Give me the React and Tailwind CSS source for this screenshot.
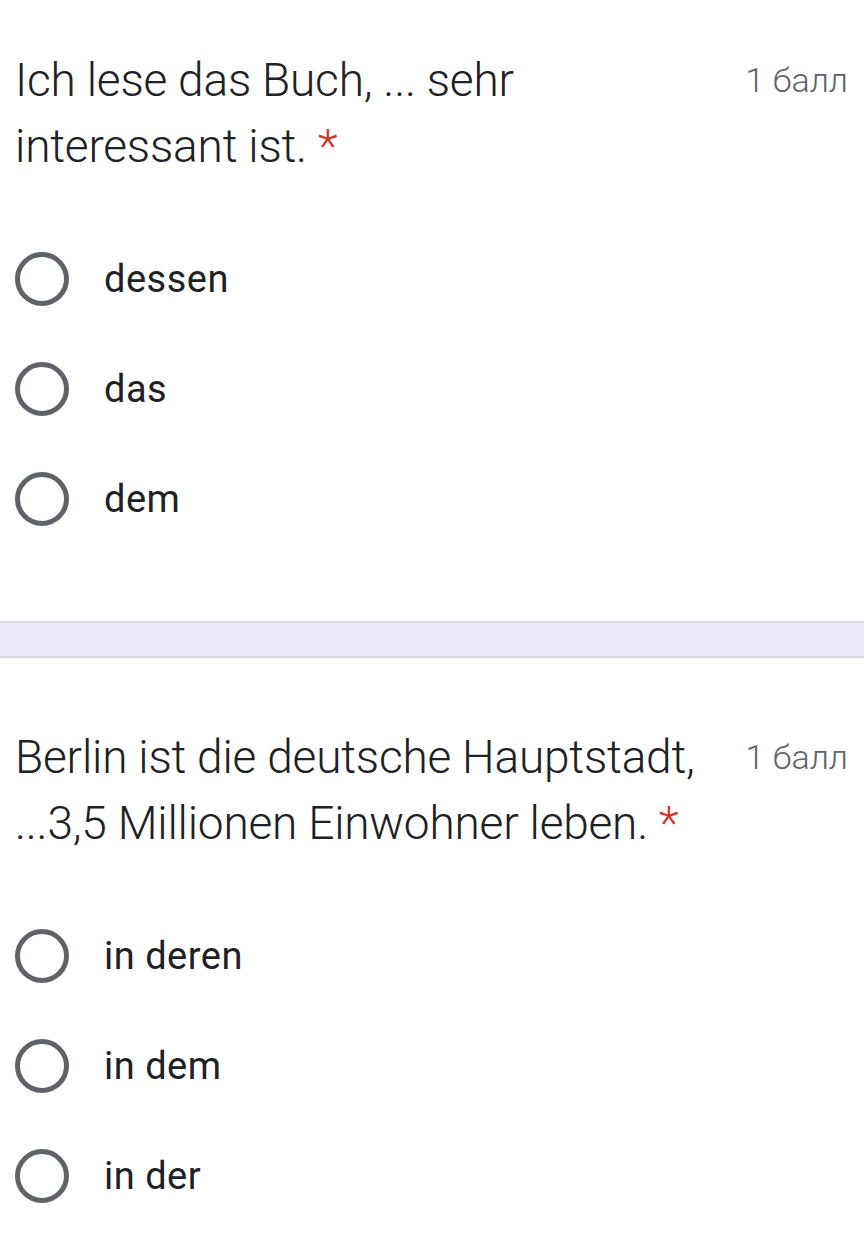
const questions = [
  {
    lines: ["Ich lese das Buch, ... sehr", "interessant ist."],
    options: ["dessen", "das", "dem"],
  },
  {
    lines: ["Berlin ist die deutsche Hauptstadt,", "...3,5 Millionen Einwohner leben."],
    options: ["in deren", "in dem", "in der"],
  },
];

function Radio() {
  return (
    <div className="w-[54px] h-[54px] rounded-full border-[5px] border-[#5f6368] shrink-0" />
  );
}

function Question({ q }) {
  return (
    <div className="pl-[15px] pr-[16px]">
      <div className="flex items-start justify-between">
        <div className="text-[46px] leading-[66px] font-light text-[#202124] tracking-[-0.2px]">
          {q.lines[0]}
          <br />
          {q.lines[1]} <span className="text-[#d93025]">*</span>
        </div>
        <div className="text-[34px] leading-[66px] font-light text-[#5f6368] whitespace-nowrap">
          1 балл
        </div>
      </div>
      <div className="mt-[73px] flex flex-col gap-[56px]">
        {q.options.map((o) => (
          <div key={o} className="flex items-center h-[54px]">
            <Radio />
            <span className="ml-[35px] text-[38px] text-[#202124] tracking-[0.5px]">{o}</span>
          </div>
        ))}
      </div>
    </div>
  );
}

export default function App() {
  return (
    <div className="w-[864px] h-[1260px] bg-white overflow-hidden font-['Roboto',sans-serif]">
      <div className="pt-[47px] pb-[95px]">
        <Question q={questions[0]} />
      </div>
      <div className="h-[37px] bg-[#ede9f7] border-y-[2px] border-[#d9d7df]" />
      <div className="pt-[66px]">
        <Question q={questions[1]} />
      </div>
    </div>
  );
}
